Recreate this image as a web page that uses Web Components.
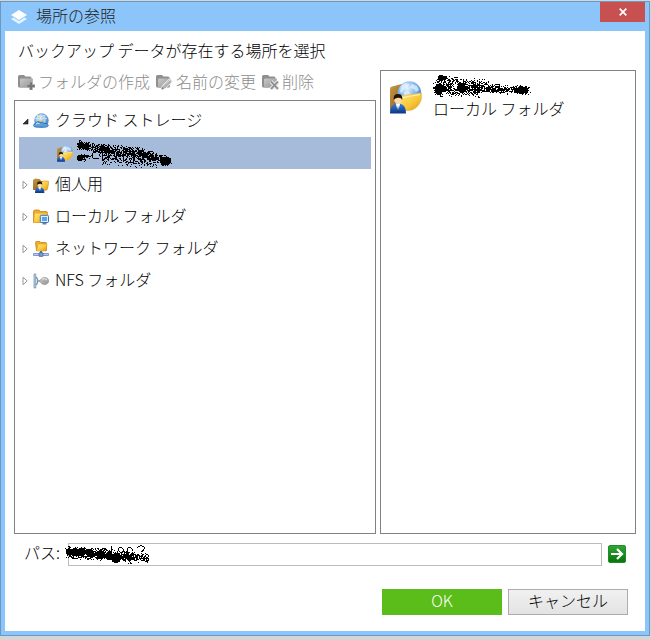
<!DOCTYPE html>
<html lang="ja">
<head>
<meta charset="utf-8">
<title>場所の参照</title>
<style>
html, body { height: 100%; }
body { margin: 0; background: #d5d5d5; font: 300 16px/20px "Noto Sans CJK JP", sans-serif; color: #000; box-sizing: border-box; padding: 1px 1px 4px 0; }
</style>
</head>
<body>
<browse-dialog></browse-dialog>
<script>
const define = (name, html, setup) => {
  const template = document.createElement('template');
  template.innerHTML = '<style>*,:host{box-sizing:border-box}svg{display:block}button{font:inherit;color:inherit;border:0;padding:0;background:none}.text{display:block;padding-bottom:4px}</style>' + html;
  customElements.define(name, class extends HTMLElement {
    constructor() {
      super();
      this.attachShadow({ mode: 'open' }).append(template.content.cloneNode(true));
    }
    connectedCallback() { if (setup) setup(this, this.shadowRoot); }
  });
};

const gradients = `<defs>
<linearGradient id="gold" x1="0" y1="0" x2="1" y2="1"><stop offset="0" stop-color="#ffe77a"/><stop offset=".55" stop-color="#f9c83b"/><stop offset="1" stop-color="#dc9410"/></linearGradient>
<linearGradient id="brown" x1="0" y1="0" x2="1" y2="1"><stop offset="0" stop-color="#c99a45"/><stop offset="1" stop-color="#77501b"/></linearGradient>
<radialGradient id="globe" cx=".4" cy=".3" r=".75"><stop offset="0" stop-color="#e4f3ff"/><stop offset=".5" stop-color="#83b9ee"/><stop offset="1" stop-color="#2f72c0"/></radialGradient>
<linearGradient id="suit" x1="0" y1="0" x2="0" y2="1"><stop offset="0" stop-color="#3a80d8"/><stop offset="1" stop-color="#07368a"/></linearGradient>
<linearGradient id="grey" x1="0" y1="0" x2="1" y2="1"><stop offset="0" stop-color="#c9c9c9"/><stop offset="1" stop-color="#929292"/></linearGradient>
<linearGradient id="green" x1="0" y1="0" x2="0" y2="1"><stop offset="0" stop-color="#34a636"/><stop offset="1" stop-color="#04740c"/></linearGradient>
</defs>`;
const greyFolder = '<path d="M0 2.500Q0 1 1.500 1H6l1.500 1.500H12q1.500 0 1.500 1.500v9.500H1.500Q0 13.500 0 12z" fill="#8f8f8f"/><path d="M2 5.500q.2-1 1.200-1H14q1.200 0 1 1.200l-1.400 7.300-11.600.8z" fill="url(#grey)"/>';
const user = '<path d="M0 16q0-5 3-6l2-.4 2 .4q3 1 3 6z" fill="url(#suit)"/><path d="M3.600 9.600L5 15l1.400-5.400z" fill="#fff"/><path d="M5 11l-.6 3.500.6 1 .6-1z" fill="#173b72"/><circle cx="5" cy="7.200" r="2.400" fill="#ffd9a3"/><path d="M2.400 7.500Q1.800 3.800 5 3.800t2.600 3.700Q7 5.800 5 6.100T2.400 7.500z" fill="#251403"/>';
const icons = {
  layers: [16, 14, '<path d="M0 9l2.500-1.500L8 11l5.500-3.500L16 9l-8 5z" fill="#e3f3ff"/><path d="M8 0l8 5-8 5-8-5z" fill="#fff"/>'],
  create: [17, 16, greyFolder + '<path d="M11.500 8h3v2.500H17v3h-2.500V16h-3v-2.500H9v-3h2.500z" fill="#777" stroke="#bbb" stroke-width=".6"/>'],
  rename: [17, 16, greyFolder + '<path d="M5.500 15.500l.8-4L13 5.200q2.500 0 3 2.800l-6.500 6.300z" fill="#b0b0b0" stroke="#eee" stroke-width=".9"/><path d="M7 12L14 6" stroke="#ddd"/><path d="M5.500 15.500l.6-2.500 2 1.800z" fill="#777"/>'],
  remove: [17, 16, greyFolder + '<path d="M9 7.500l7 7.500m0-7.500L9 15" stroke="#e2e2e2" stroke-width="4"/><path d="M9 7.500l7 7.500m0-7.500L9 15" stroke="#8b8b8b" stroke-width="1.800"/>'],
  cloud: [16, 16, '<circle cx="8.500" cy="7.500" r="6.800" fill="url(#globe)" stroke="#508cc7" stroke-width=".7"/><path d="M4 2.500q3 2 8 0M2 5.500h12M8 1v10M5 2q-2 4-.5 8M11 2q2 4 .5 8" fill="none" stroke="#d9efff" stroke-width=".6"/><path d="M5.500 4h1.500v1.300H5.500zm3 0H10v1.300H8.500zm-4 3H6v1.300H4.500zm3 0H9v1.300H7.500zm3 0H12v1.300h-1.500z" fill="#ffcf42"/><path d="M.6 12.600q0-2.400 2.600-2.600Q4.500 7.500 7 9.400q2.500-1 3.500 1 4-.8 5 2-.6 1.600-3 1.800H3.500q-2.600 0-2.900-1.600z" fill="#5d9fdc" stroke="#1e5f9f" stroke-width=".7"/><path d="M3 11q2-1.500 3.500-.3" stroke="#d8efff" fill="none"/>'],
  cloudUser: [32, 34, '<path d="M0 9q0-2 2-2.400L12 4l5 6v20L2 32q-2 0-2-3z" fill="url(#brown)"/><circle cx="19.500" cy="13" r="11.700" fill="url(#globe)"/><path d="M11 6l4-3 4 1-1 3-4 2-2 4-2-1zM22 4l5 2 2 4-3 2-2-3-4-1zM14 12l4-1 3 3-2 3-5-1z" fill="#edf7ff" opacity=".65"/><path d="M9 16l22-3q1 0 .8 3-.3 7-5.500 11.500-3 2.800-7.300 3L10 31z" fill="url(#gold)" stroke="#e6b14a" stroke-width=".5"/><path d="M10.500 18L30 14.500" stroke="#fff7b8"/><g transform="translate(0 8) scale(1.600 1.600)">' + user + '</g>'],
  personal: [16, 16, '<path d="M0 3l2-1.500 5 .7L8 4h6v9H0z" fill="url(#brown)"/><path d="M5 6q0-1 1-1h3l1-1h5q1 0 .8 1.200L14.500 12q-.4 1-1.500 1.200L5 14z" fill="url(#gold)" stroke="#bd8018" stroke-width=".5"/><g transform="translate(2 1) scale(.94)">' + user + '</g>'],
  local: [16, 16, '<path d="M.5 2.500q0-1.500 1.500-1.500h4L7 2.500h6q1.500 0 1.500 1.500v9.500H.5z" fill="#efaa26" stroke="#c47b12" stroke-width=".7"/><path d="M2 4.500h12.500L14 13.500H1z" fill="url(#gold)"/><rect x="7.300" y="6.300" width="8.200" height="7.200" rx="1" fill="#dceeff" stroke="#3c6fac"/><path d="M9 8h5v4H9z" fill="#55a5ee"/><path d="M9.500 14h4v1.500h-4z" fill="#657eb8"/>'],
  network: [16, 16, '<path d="M2.500 1.500q0-1 1-1h3.500l1 1h4.500q1 0 1 1V9.500H3.500z" fill="#efad2c" stroke="#bf7711" stroke-width=".7"/><path d="M5 3h9l-1 7H3.500z" fill="url(#gold)" stroke="#d7951b" stroke-width=".5"/><path d="M8 10v3" stroke="#526fae" stroke-width="2"/><path d="M.5 12.500h15v2H.5z" fill="#b8cbed" stroke="#6484bf" stroke-width=".8"/><rect x="6" y="11.600" width="4" height="4" rx=".7" fill="#7896d1" stroke="#3e5e9d" stroke-width=".7"/>'],
  nfs: [16, 16, '<path d="M1 1h1.800v14H1z" fill="#b5d0e9" stroke="#6d8ca8" stroke-width=".7"/><path d="M3 4l1.500 2v4L3 12m1-4h3" fill="none" stroke="#8196aa" stroke-width="1.300"/><path d="M6 8l3-3q3-1.500 5 0 2 1.500 2 3t-2 3q-2 1.500-5 0z" fill="url(#grey)" stroke="#999" stroke-width=".5"/><path d="M9 6q3-1 5 1" stroke="#ececec" fill="none"/>'],
  open: [7, 7, '<path d="M6 1v5H1z" fill="#333" stroke="#111" stroke-width=".6"/>'],
  closed: [6, 10, '<path d="M1 1.300v7.400L5.200 5z" fill="#fff" stroke="#999"/>'],
  go: [18, 18, '<rect x=".5" y=".5" width="17" height="17" rx="1.500" fill="url(#green)" stroke="#248b29"/><path d="M3 9h11M9 4l5 5-5 5" fill="none" stroke="#fff" stroke-width="2.200"/>'],
  close: [8, 8, '<path d="M.7.7l6.600 6.600m0-6.600L.7 7.300" stroke="#fff" stroke-width="1.700"/>']
};

define('ui-icon', '<style>:host{display:block;flex:none}</style><span></span>', (host, root) => {
  const [w, h, art] = icons[host.getAttribute('name')];
  const width = host.getAttribute('size') || w;
  root.querySelector('span').innerHTML = `<svg width="${width}" height="${Math.round(width * h / w)}" viewBox="0 0 ${w} ${h}" aria-hidden="true">${gradients}${art}</svg>`;
});

/* Pen strokes that hide an account name: dense blots joined by spattered dots. */
const marks = {
  tree: { w: 98, h: 28, blots: [[6,5,3],[12,7,2],[5,18,3],[89,21,4],[93,21,3]], spray: [[2,5,30,9,4,260],[22,9,68,13,5,520],[62,12,94,21,4,300],[2,18,12,17,3,70],[25,17,92,22,6,330]], strokes: 'M9 15q4 4 9 0M22 11q-7 1-4 7h6M27 11v9m6-12v12m4-11h8l-5 9M48 10v12q5-3 6-9m5-2v9m4-8q7-2 6 4t-6 3 0-7m10 0q7-2 6 4t-6 3 0-7' },
  list: { w: 98, h: 24, blots: [[8,4,3],[12,4,2],[7,14,4],[11,15,3],[6,18,3],[28,14,4],[60,16,2],[88,16,4],[92,16,3]], spray: [[5,4,54,9,3,110],[0,14,45,14,7,560],[40,14,95,16,4,420]], strokes: 'M42 8v11m4-10v10m5-8q5-2 5 3t-5 3 0-6m11 0q5-2 5 3t-5 3 0-6' },
  path: { w: 85, h: 20, blots: [[4,8,3],[10,8,4],[17,8,4],[25,9,4],[36,11,4],[44,12,4],[51,14,5],[60,12,2]], spray: [[1,8,35,10,5,420],[30,10,65,13,5,380],[58,11,83,14,4,200]], strokes: 'M7 13q4 3 8 0M36 7q3-6 6 0M46 2v8M53 7q2-8 6 0m3 0q2-8 6 0m4-3q3-4 7-1 1 3-3 5' }
};
define('pen-mark', '<style>:host{display:block;flex:none}</style><span></span>', (host, root) => {
  const m = marks[host.getAttribute('kind')];
  let seed = 41;
  const random = () => (seed = (seed * 16807) % 2147483647) / 2147483647;
  let dots = '';
  for (const [x1, y1, x2, y2, spread, n] of m.spray)
    for (let i = 0; i < n; i++) {
      const t = random();
      const x = Math.round(x1 + (x2 - x1) * t + random() * 3 - 1);
      const y = Math.round(y1 + (y2 - y1) * t + (random() + random() - 1) * spread * 1.3);
      dots += `M${x} ${y}h1v1h-1z`;
    }
  const blots = m.blots.map(([x, y, r]) => `<circle cx="${x}" cy="${y}" r="${r}"/>`).join('');
  root.querySelector('span').innerHTML = `<svg width="${m.w}" height="${m.h}" aria-hidden="true" shape-rendering="crispEdges"><path d="${dots}"/>${blots}<path d="${m.strokes}" fill="none" stroke="#000"/></svg>`;
});

define('title-bar', `<style>
:host{display:flex;height:29px;flex:none;align-items:center;padding-left:6px;color:#222}
h1{font:inherit;margin:0 0 0 9px;flex:1}
button{align-self:flex-start;width:45px;height:20px;background:#c75050;display:grid;place-items:center}
</style><ui-icon name="layers"></ui-icon><h1 class="text"><slot></slot></h1><button aria-label="閉じる"><ui-icon name="close"></ui-icon></button>`);

define('tool-button', `<style>
:host{display:block;color:#8c8c8c}
button{display:flex;align-items:center;gap:3px;height:24px;white-space:nowrap}
.text{padding-bottom:2px}
</style><button disabled><span class="icon"></span><span class="text"><slot></slot></span></button>`, (host, root) => {
  root.querySelector('.icon').innerHTML = `<ui-icon name="${host.getAttribute('icon')}"></ui-icon>`;
});

define('tree-item', `<style>
:host{display:flex;align-items:center;height:32px;padding-left:3px}
:host([selected]){background:#a5bbd9;padding-left:38px}
.arrow{width:11px;display:grid;place-items:center start}
.icon{margin-right:6px}
:host([selected]) .arrow{width:0}
:host([selected]) .icon{margin-right:2px}
:host([selected]) .text{padding:2px 0 0}
</style><span class="arrow"></span><span class="icon"></span><span class="text"><slot></slot></span>`, (host, root) => {
  const state = host.getAttribute('state');
  if (state) root.querySelector('.arrow').innerHTML = `<ui-icon name="${state}"></ui-icon>`;
  root.querySelector('.icon').innerHTML = `<ui-icon name="${host.getAttribute('icon')}" size="16"></ui-icon>`;
});

define('folder-tree', `<style>
:host{display:block;flex:1;border:1px solid #828282;padding:4px;min-height:0;overflow:hidden}
</style><div role="tree" aria-label="フォルダ">
<tree-item role="treeitem" state="open" icon="cloud">クラウド ストレージ</tree-item>
<tree-item role="treeitem" selected icon="cloudUser"><pen-mark kind="tree"></pen-mark></tree-item>
<tree-item role="treeitem" state="closed" icon="personal">個人用</tree-item>
<tree-item role="treeitem" state="closed" icon="local">ローカル フォルダ</tree-item>
<tree-item role="treeitem" state="closed" icon="network">ネットワーク フォルダ</tree-item>
<tree-item role="treeitem" state="closed" icon="nfs">NFS フォルダ</tree-item></div>`);

define('place-list', `<style>
:host{display:block;border:1px solid #828282;padding:1px 9px;min-width:0;overflow:hidden}
.place{display:flex;align-items:center;gap:11px}
.name{display:flex;flex-direction:column;padding-top:2px}
</style><div class="place"><ui-icon name="cloudUser"></ui-icon><div class="name"><pen-mark kind="list"></pen-mark><span class="text"><slot></slot></span></div></div>`);

define('path-field', `<style>
:host{display:flex;align-items:center;padding:8px 19px 0 19px}
label{margin-right:8px}
.box{display:grid;flex:1;min-width:0}
input{grid-area:1/1;width:100%;height:23px;border:1px solid #bcbcbc;background:#fff;font:inherit;padding:0 4px;border-radius:0}
pen-mark{grid-area:1/1;z-index:1;justify-self:start;align-self:center;margin-left:-3px;pointer-events:none}
button{margin-left:6px}
</style><label class="text" for="path">パス:</label><div class="box"><input id="path" type="text"><pen-mark kind="path"></pen-mark></div><button aria-label="移動"><ui-icon name="go"></ui-icon></button>`);

define('action-button', `<style>
:host{display:block}
button{width:120px;height:26px;border:1px solid #adadad;background:linear-gradient(#f1f1f1,#e3e3e3)}
:host([primary]) button{background:#5bbd19;border-color:#5bbd19;color:#fff}
</style><button><span class="text"><slot></slot></span></button>`);

define('browse-dialog', `<style>
:host{display:flex;flex-direction:column;height:100%;border:1px solid #6899c6;background:#8cc5fa;padding:0 4px 4px}
main{flex:1;min-height:0;background:#fff;display:flex;flex-direction:column}
h2{font:inherit;margin:0;padding:9px 13px 10px}
.panes{flex:1;min-height:0;display:grid;grid-template-columns:362fr 256fr;gap:4px;padding:0 9px}
.left{display:flex;flex-direction:column;min-width:0}
.tools{display:flex;gap:6px;height:30px;padding-left:4px}
footer{display:flex;justify-content:flex-end;gap:6px;padding:23px 17px 16px}
</style>
<title-bar>場所の参照</title-bar>
<main><h2>バックアップ データが存在する場所を選択</h2>
<div class="panes"><div class="left"><div class="tools"><tool-button icon="create">フォルダの作成</tool-button><tool-button icon="rename">名前の変更</tool-button><tool-button icon="remove">削除</tool-button></div><folder-tree></folder-tree></div>
<place-list>ローカル フォルダ</place-list></div>
<path-field></path-field>
<footer><action-button primary>OK</action-button><action-button>キャンセル</action-button></footer></main>`);
</script>
</body>
</html>
